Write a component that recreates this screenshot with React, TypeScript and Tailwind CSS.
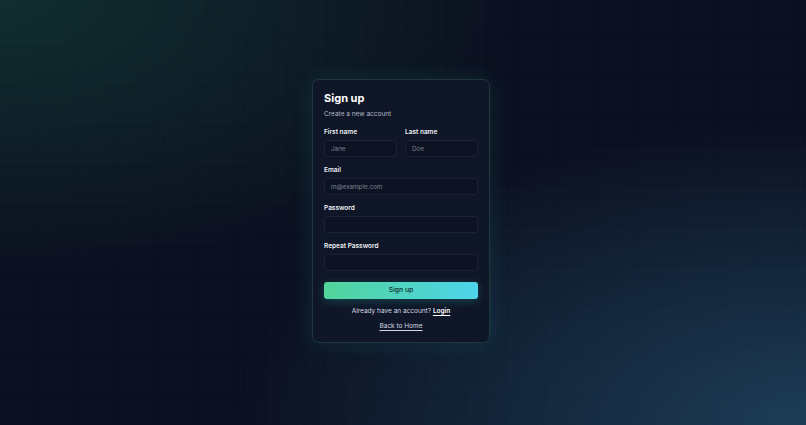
import React from 'react';

const Field: React.FC<{ label: string; placeholder?: string; type?: string }> = ({ label, placeholder, type = 'text' }) => (
  <div className="flex flex-col gap-[3px]">
    <label className="text-[6.5px] leading-[10px] font-semibold text-[#eef0f4]">{label}</label>
    <input
      type={type}
      placeholder={placeholder}
      className="h-[17px] w-full rounded-[3px] border border-[#1a2233] bg-[#0d1323] px-[6px] text-[6.3px] text-gray-200 placeholder:text-[#7c8393] outline-none"
    />
  </div>
);

export default function App() {
  return (
    <div className="relative h-[425px] w-[806px] overflow-hidden bg-[#0b1020] font-['Inter',sans-serif] antialiased">
      <div className="absolute inset-0 bg-[radial-gradient(ellipse_at_0%_0%,rgba(20,70,60,0.55),transparent_45%)]" />
      <div className="absolute inset-0 bg-[radial-gradient(ellipse_at_100%_100%,rgba(35,80,110,0.7),transparent_50%)]" />
      <div className="absolute inset-0 bg-[linear-gradient(rgba(255,255,255,0.01)_1px,transparent_1px),linear-gradient(90deg,rgba(255,255,255,0.01)_1px,transparent_1px)] bg-[size:10px_10px]" />

      <div className="relative flex h-full items-center justify-center pr-[4px] pb-[3px]">
        <div className="w-[178px] rounded-[7px] border border-[#1f363d] bg-[#0f1628] px-[11px] pt-[10px] pb-[11px] shadow-[0_0_22px_rgba(45,212,191,0.12)]">
          <h1 className="text-[11px] leading-[16px] font-bold text-white">Sign up</h1>
          <p className="mt-[3px] text-[6.5px] leading-[10px] text-[#b3b8c4]">Create a new account</p>

          <div className="mt-[8px] flex flex-col gap-[8px]">
            <div className="grid grid-cols-2 gap-[8px]">
              <Field label="First name" placeholder="Jane" />
              <Field label="Last name" placeholder="Doe" />
            </div>
            <Field label="Email" placeholder="m@example.com" type="email" />
            <Field label="Password" type="password" />
            <Field label="Repeat Password" type="password" />
          </div>

          <button className="mt-[11px] flex h-[17px] w-full items-center justify-center rounded-[3px] bg-[linear-gradient(90deg,#52d49a,#4dd4ea)] text-[6.8px] font-medium text-[#0e2a2c] shadow-[0_2px_10px_rgba(45,212,191,0.25)]">
            Sign up
          </button>

          <p className="mt-[7px] text-center text-[6.5px] leading-[10px] text-[#d5d9e2]">
            Already have an account?{' '}
            <a className="font-semibold text-white underline underline-offset-2">Login</a>
          </p>
          <p className="mt-[5px] text-center text-[6.5px] leading-[10px]">
            <a className="text-[#d5d9e2] underline underline-offset-2">Back to Home</a>
          </p>
        </div>
      </div>
    </div>
  );
}
